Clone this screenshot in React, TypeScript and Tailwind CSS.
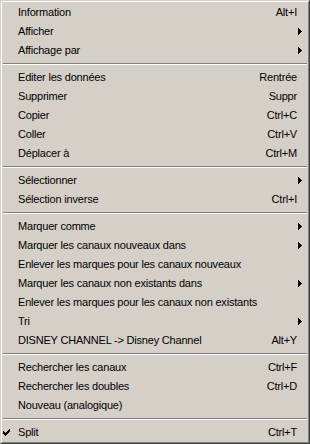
import React from "react";

type Item =
  | { sep: true }
  | { sep?: false; label: string; shortcut?: string; sub?: boolean; checked?: boolean };

const items: Item[] = [
  { label: "Information", shortcut: "Alt+I" },
  { label: "Afficher", sub: true },
  { label: "Affichage par", sub: true },
  { sep: true },
  { label: "Editer les données", shortcut: "Rentrée" },
  { label: "Supprimer", shortcut: "Suppr" },
  { label: "Copier", shortcut: "Ctrl+C" },
  { label: "Coller", shortcut: "Ctrl+V" },
  { label: "Déplacer à", shortcut: "Ctrl+M" },
  { sep: true },
  { label: "Sélectionner", sub: true },
  { label: "Sélection inverse", shortcut: "Ctrl+I" },
  { sep: true },
  { label: "Marquer comme", sub: true },
  { label: "Marquer les canaux nouveaux dans", sub: true },
  { label: "Enlever les marques pour les canaux nouveaux" },
  { label: "Marquer les canaux non existants dans", sub: true },
  { label: "Enlever les marques pour les canaux non existants" },
  { label: "Tri", sub: true },
  { label: "DISNEY CHANNEL -> Disney Channel", shortcut: "Alt+Y" },
  { sep: true },
  { label: "Rechercher les canaux", shortcut: "Ctrl+F" },
  { label: "Rechercher les doubles", shortcut: "Ctrl+D" },
  { label: "Nouveau (analogique)" },
  { sep: true },
  { label: "Split", shortcut: "Ctrl+T", checked: true },
];

function Arrow() {
  return (
    <svg width="4" height="7" viewBox="0 0 4 7" className="block" shapeRendering="crispEdges">
      <path d="M0 0h1v7h-1z M1 1h1v5h-1z M2 2h1v3h-1z M3 3h1v1h-1z" fill="#000" />
    </svg>
  );
}

const checkPixels: [number, number, number][] = [
  [6, 0, 1],
  [5, 1, 2],
  [0, 2, 1],
  [4, 2, 3],
  [0, 3, 2],
  [3, 3, 3],
  [0, 4, 5],
  [1, 5, 3],
  [2, 6, 1],
];

function Check() {
  return (
    <svg width="7" height="7" viewBox="0 0 7 7" className="block" shapeRendering="crispEdges">
      {checkPixels.map(([x, y, w], i) => (
        <rect key={i} x={x} y={y} width={w} height={1} fill="#000" />
      ))}
    </svg>
  );
}

export default function App() {
  return (
    <div className="w-[310px] h-[444px] bg-[#d4d0c8] border border-t-[#d4d0c8] border-l-[#d4d0c8] border-r-[#404040] border-b-[#404040] text-black">
      <div className="h-full border border-t-white border-l-white border-r-[#808080] border-b-[#808080] pt-[1px] px-[1px] font-['Liberation_Sans',Arial,sans-serif] text-[11px] tracking-[-0.2px]">
        {items.map((it, i) =>
          it.sep ? (
            <div key={i} className="h-[8px] flex flex-col justify-center">
              <div className="h-px bg-[#808080]" />
              <div className="h-px bg-white" />
            </div>
          ) : (
            <div key={i} className="h-[19px] flex items-center">
              <div className="w-[15px] flex justify-start">
                {it.checked ? <Check /> : null}
              </div>
              <div className="flex-1 whitespace-nowrap">{it.label}</div>
              <div className="whitespace-nowrap">{it.shortcut ?? ""}</div>
              <div className="w-[10px] flex justify-end pr-[5px]">{it.sub ? <Arrow /> : null}</div>
            </div>
          )
        )}
      </div>
    </div>
  );
}
